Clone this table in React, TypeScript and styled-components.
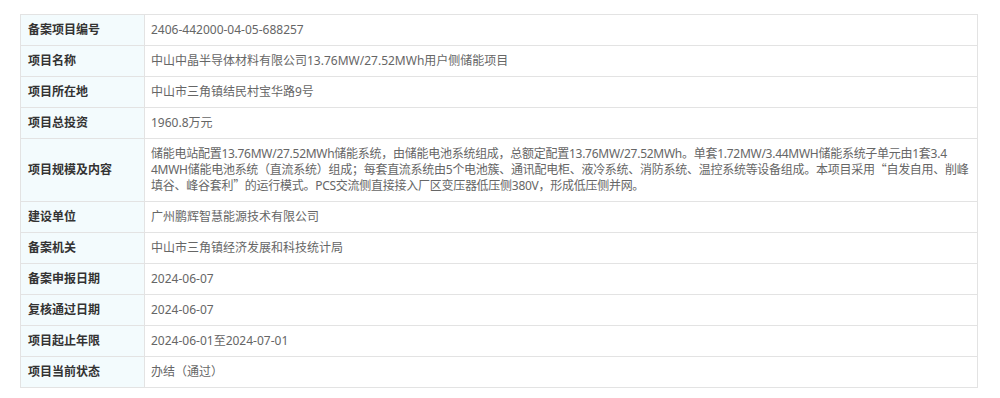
import React from "react";
import styled, {createGlobalStyle} from "styled-components";

const GlobalStyle = createGlobalStyle`
  body {
    margin: 0;
    background: #ffffff;
    font-family: "Noto Sans", "Noto Sans CJK SC", sans-serif;
  }
`

const Page = styled.div`
  padding: 14px 22px 0 20px;
`

const Table = styled.table`
  width: 958px;
  border-collapse: collapse;
  border: 1px solid #e3e3e3;
  font-size: 12px;
  line-height: 16px;
`

const Label = styled.th`
  width: 110px;
  padding: 7px 6px 7px 7px;
  background: #f3fbfd;
  border: 1px solid #e3e3e3;
  color: #333333;
  font-weight: bold;
  text-align: left;
  vertical-align: middle;
`

const Value = styled.td<{ $tight?: boolean }>`
  padding: 7px 4px 7px 6px;
  border: 1px solid #e3e3e3;
  color: #666666;
  word-break: break-all;
  vertical-align: middle;
  letter-spacing: ${props => props.$tight ? "-0.27px" : "normal"};
`

// full-width CJK quotation marks
const Quote = styled.span`
  font-family: "Noto Sans CJK SC", sans-serif;
  line-height: 0;
`

const scope = (
    <>
        储能电站配置13.76MW/27.52MWh储能系统，由储能电池系统组成，总额定配置13.76MW/27.52MWh。单套1.72MW/3.44MWH储能系统子单元由1套3.4<br/>4MWH储能电池系统（直流系统）组成；每套直流系统由5个电池簇、通讯配电柜、液冷系统、消防系统、温控系统等设备组成。本项目采用<Quote>“</Quote>自发自用、削峰填谷、峰谷套利<Quote>”</Quote>的运行模式。PCS交流侧直接接入厂区变压器低压侧380V，形成低压侧并网。
    </>
)

const rows: [string, React.ReactNode, boolean?][] = [
    ["备案项目编号", "2406-442000-04-05-688257"],
    ["项目名称", "中山中晶半导体材料有限公司13.76MW/27.52MWh用户侧储能项目"],
    ["项目所在地", "中山市三角镇结民村宝华路9号"],
    ["项目总投资", "1960.8万元"],
    ["项目规模及内容", scope, true],
    ["建设单位", "广州鹏辉智慧能源技术有限公司"],
    ["备案机关", "中山市三角镇经济发展和科技统计局"],
    ["备案申报日期", "2024-06-07"],
    ["复核通过日期", "2024-06-07"],
    ["项目起止年限", "2024-06-01至2024-07-01"],
    ["项目当前状态", "办结（通过）"],
]

export default function App() {
    return (
        <Page>
            <GlobalStyle/>
            <Table>
                <tbody>
                {rows.map(([k, v, tight]) => (
                    <tr key={k}>
                        <Label>{k}</Label>
                        <Value $tight={tight}>{v}</Value>
                    </tr>
                ))}
                </tbody>
            </Table>
        </Page>
    )
}
